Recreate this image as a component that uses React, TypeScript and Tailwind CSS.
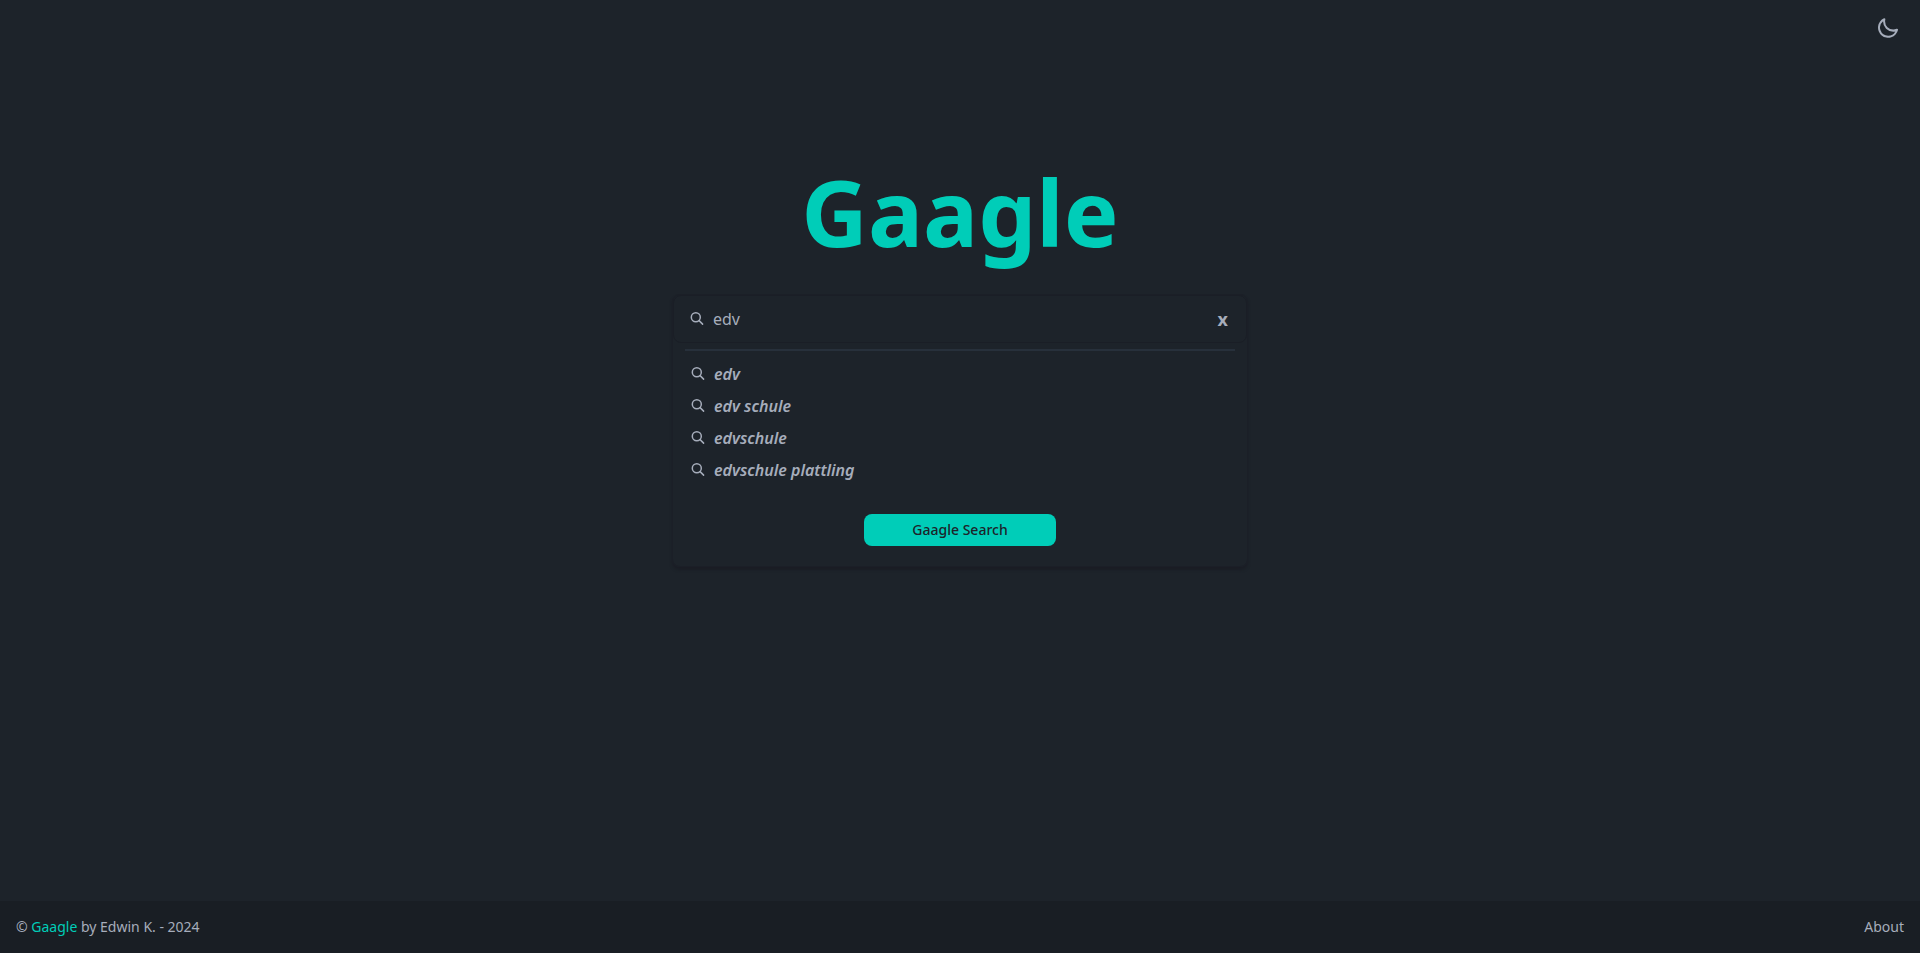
import { useState } from "react";

const SUGGESTIONS = ["edv", "edv schule", "edvschule", "edvschule plattling"];

const SearchIcon: React.FC = () => (
  <svg
    className="h-4 w-4 shrink-0"
    viewBox="0 0 16 16"
    fill="none"
    stroke="currentColor"
    strokeWidth="1.5"
    strokeLinecap="round"
    aria-hidden="true"
  >
    <circle cx="6.8" cy="6.3" r="4.5" />
    <path d="M10.1 9.6 13.6 13.1" />
  </svg>
);

const MoonIcon: React.FC = () => (
  <svg
    className="h-6 w-6"
    viewBox="0 0 24 24"
    fill="currentColor"
    aria-hidden="true"
  >
    <path d="M21.64,13a1,1,0,0,0-1.05-.14,8.05,8.05,0,0,1-3.37.73A8.15,8.15,0,0,1,9.08,5.49a8.59,8.59,0,0,1,.25-2A1,1,0,0,0,8,2.36,10.14,10.14,0,1,0,22,14.05,1,1,0,0,0,21.64,13Zm-9.5,6.69A8.14,8.14,0,0,1,7.08,5.22v.27A10.15,10.15,0,0,0,17.22,15.63a9.79,9.79,0,0,0,2.1-.22A8.11,8.11,0,0,1,12.14,19.73Z" />
  </svg>
);

const Footer: React.FC = () => (
  <footer className="flex items-center justify-between bg-[#191e24] p-4 text-sm">
    <p>
      ©{" "}
      <a href="#" className="text-[#00cdb8]">
        Gaagle
      </a>{" "}
      by Edwin K. - 2024
    </p>
    <a href="#about">About</a>
  </footer>
);

export default function App() {
  const [query, setQuery] = useState("edv");

  return (
    <div className="flex min-h-screen flex-col bg-[#1d232a] font-['Noto_Sans',sans-serif] text-[#a6adbb]">
      <header className="flex justify-end px-5 py-4">
        <button type="button" aria-label="Toggle theme">
          <MoonIcon />
        </button>
      </header>

      <main className="flex grow flex-col items-center px-4 pt-27">
        <h1 className="text-[92px] leading-24 font-bold text-[#00cdb8]">
          Gaagle
        </h1>

        <form
          className="mt-[34px] w-full max-w-xl rounded-lg border border-[#1b1f27] shadow-[0_3px_3px_#1a1d25]"
          onSubmit={(e) => e.preventDefault()}
        >
          <label className="flex h-12 items-center gap-2 rounded-lg border border-[#1a1e26] pr-[18px] pl-[15px]">
            <SearchIcon />
            <input
              type="text"
              aria-label="Search"
              className="min-w-0 grow bg-transparent outline-none"
              value={query}
              onChange={(e) => setQuery(e.target.value)}
            />
            <button
              type="button"
              aria-label="Clear"
              className="text-lg font-bold"
              onClick={() => setQuery("")}
            >
              x
            </button>
          </label>

          <hr className="mx-3 mt-1.5 border-t-2 border-[#27303b]" />

          <ul className="mt-[7px] px-[17px]">
            {SUGGESTIONS.map((s) => (
              <li key={s}>
                <button
                  type="button"
                  className="flex h-8 w-full items-center gap-2 font-semibold italic"
                  onClick={() => setQuery(s)}
                >
                  <SearchIcon />
                  {s}
                </button>
              </li>
            ))}
          </ul>

          <div className="flex justify-center pt-7 pb-5">
            <button
              type="submit"
              className="h-8 w-48 rounded-lg bg-[#00cdb8] text-sm font-medium text-[#1d232a]"
            >
              Gaagle Search
            </button>
          </div>
        </form>
      </main>

      <Footer />
    </div>
  );
}
